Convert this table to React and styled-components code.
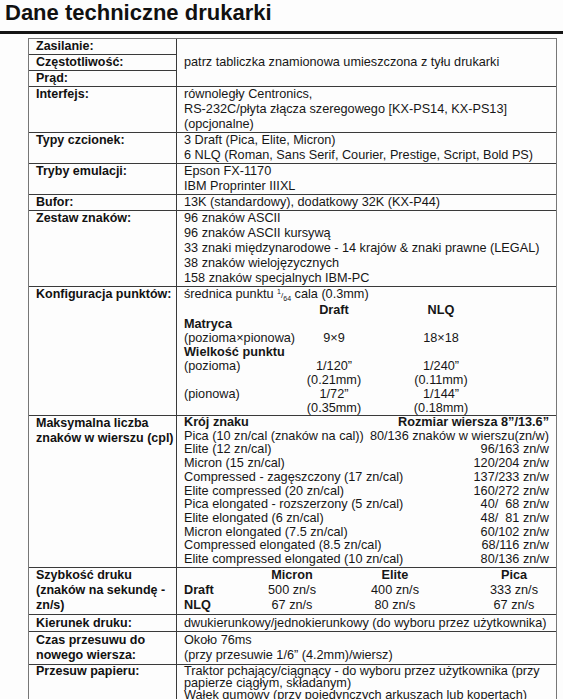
import React from 'react'
import styled, { createGlobalStyle } from 'styled-components'

const Global = createGlobalStyle`
  html, body {
    margin: 0;
    padding: 0;
    background: #fdfdfd;
  }
  body {
    font-family: "Liberation Sans", Arial, sans-serif;
    color: #161616;
    overflow: hidden;
  }
`

const Page = styled.div`
  width: 563px;
  height: 699px;
  overflow: hidden;
`

const Title = styled.h1`
  margin: 0;
  padding-left: 5px;
  font-size: 22px;
  line-height: 26px;
  font-weight: bold;
  color: #111;
`

const Rule = styled.div`
  height: 3px;
  margin-top: 5px;
  background: #151515;
`

const Table = styled.div`
  margin: 4px 0 0 28px;
  width: 529px;
  box-sizing: border-box;
  border: 1px solid #777;
  border-bottom: none;
  font-size: 12.7px;
`

const Row = styled.div`
  display: grid;
  grid-template-columns: 148px 1fr;
  border-bottom: 1px solid #3a3a3a;
  line-height: ${p => p.$lh || 15}px;
  padding: ${p => p.$pad || 0}px 0;
`

const Label = styled.div`
  box-sizing: border-box;
  padding-left: 7px;
  border-right: 1px solid #3a3a3a;
  font-weight: bold;
  font-size: 12.5px;
  color: #111;
  margin: ${p => (p.$pad ? `-${p.$pad}px 0` : 0)};
  padding-top: ${p => p.$pad || 0}px;
  padding-bottom: ${p => p.$pad || 0}px;
`

const LabelStack = styled.div`
  border-right: 1px solid #3a3a3a;
`

const StackItem = styled.div`
  padding-left: 7px;
  font-weight: bold;
  font-size: 12.5px;
  color: #111;
  border-bottom: 1px solid #3a3a3a;
  &:last-child {
    border-bottom: none;
  }
`

const Value = styled.div`
  padding: 0 7px;
  align-self: ${p => (p.$center ? 'center' : 'start')};
`

const Line = styled.div`
  white-space: pre;
`

const DotGrid = styled.div`
  display: grid;
  grid-template-columns: 105px 90px 124px;
  line-height: 14px;
`

const Cell = styled.div`
  text-align: ${p => (p.$center ? 'center' : 'left')};
  font-weight: ${p => (p.$bold ? 'bold' : 'normal')};
  grid-column: ${p => (p.$span ? '1 / -1' : 'auto')};
  white-space: pre;
`

const Frac = styled.span`
  font-size: 8px;
  & sup, & sub {
    font-size: 7px;
    line-height: 0;
  }
`

const CplList = styled.div`
  line-height: 13.7px;
`

const CplHead = styled.div`
  display: flex;
  justify-content: space-between;
  font-weight: bold;
`

const CplRow = styled.div`
  display: flex;
  justify-content: space-between;
  white-space: pre;
`

const SpeedGrid = styled.div`
  display: grid;
  grid-template-columns: 60px 72px 103px 119px;
`

const SpeedKeys = styled.div`
  display: flex;
  flex-direction: column;
  font-weight: bold;
`

const SpeedCol = styled.div`
  justify-self: end;
  display: flex;
  flex-direction: column;
  align-items: center;
  & > b {
    font-weight: bold;
  }
`

const cpl = [
  ['Pica (10 zn/cal (znaków na cal))', '80/136 znaków w wierszu(zn/w)'],
  ['Elite (12 zn/cal)', '96/163 zn/w'],
  ['Micron (15 zn/cal)', '120/204 zn/w'],
  ['Compressed - zagęszczony (17 zn/cal)', '137/233 zn/w'],
  ['Elite compressed (20 zn/cal)', '160/272 zn/w'],
  ['Pica elongated - rozszerzony (5 zn/cal)', '40/  68 zn/w'],
  ['Elite elongated (6 zn/cal)', '48/  81 zn/w'],
  ['Micron elongated (7.5 zn/cal)', '60/102 zn/w'],
  ['Compressed elongated (8.5 zn/cal)', '68/116 zn/w'],
  ['Elite compressed elongated (10 zn/cal)', '80/136 zn/w'],
]

const speeds = [
  ['Micron', '500 zn/s', '67 zn/s'],
  ['Elite', '400 zn/s', '80 zn/s'],
  ['Pica', '333 zn/s', '67 zn/s'],
]

const SimpleRow = ({ label, lines, lh, pad }) => (
  <Row $lh={lh} $pad={pad}>
    <Label $pad={pad}>{label}</Label>
    <Value>
      {lines.map(l => (
        <Line key={l}>{l}</Line>
      ))}
    </Value>
  </Row>
)

const App = () => (
  <Page>
    <Global />
    <Title>Dane techniczne drukarki</Title>
    <Rule />
    <Table>
      <Row>
        <LabelStack>
          <StackItem>Zasilanie:</StackItem>
          <StackItem>Częstotliwość:</StackItem>
          <StackItem>Prąd:</StackItem>
        </LabelStack>
        <Value $center>patrz tabliczka znamionowa umieszczona z tyłu drukarki</Value>
      </Row>
      <SimpleRow
        label="Interfejs:"
        lines={['równoległy Centronics,', 'RS-232C/płyta złącza szeregowego [KX-PS14, KX-PS13]', '(opcjonalne)']}
      />
      <SimpleRow
        label="Typy czcionek:"
        lines={['3 Draft (Pica, Elite, Micron)', '6 NLQ (Roman, Sans Serif, Courier, Prestige, Script, Bold PS)']}
      />
      <SimpleRow label="Tryby emulacji:" lines={['Epson FX-1170', 'IBM Proprinter IIIXL']} />
      <SimpleRow label="Bufor:" lines={['13K (standardowy), dodatkowy 32K (KX-P44)']} />
      <SimpleRow
        label="Zestaw znaków:"
        lines={[
          '96 znaków ASCII',
          '96 znaków ASCII kursywą',
          '33 znaki międzynarodowe - 14 krajów & znaki prawne (LEGAL)',
          '38 znaków wielojęzycznych',
          '158 znaków specjalnych IBM-PC',
        ]}
      />
      <Row $lh={14}>
        <Label>Konfiguracja punktów:</Label>
        <Value>
          <DotGrid>
            <Cell $span>
              średnica punktu{' '}
              <Frac>
                <sup>1</sup>/<sub>64</sub>
              </Frac>{' '}
              cala (0.3mm)
            </Cell>
            <Cell />
            <Cell $center $bold>Draft</Cell>
            <Cell $center $bold>NLQ</Cell>
            <Cell $span $bold>Matryca</Cell>
            <Cell>(pozioma×pionowa)</Cell>
            <Cell $center>9×9</Cell>
            <Cell $center>18×18</Cell>
            <Cell $span $bold>Wielkość punktu</Cell>
            <Cell>(pozioma)</Cell>
            <Cell $center>1/120”</Cell>
            <Cell $center>1/240”</Cell>
            <Cell />
            <Cell $center>(0.21mm)</Cell>
            <Cell $center>(0.11mm)</Cell>
            <Cell>(pionowa)</Cell>
            <Cell $center>1/72”</Cell>
            <Cell $center>1/144”</Cell>
            <Cell />
            <Cell $center>(0.35mm)</Cell>
            <Cell $center>(0.18mm)</Cell>
          </DotGrid>
        </Value>
      </Row>
      <Row $lh={15}>
        <Label>
          Maksymalna liczba
          <br />
          znaków w wierszu (cpl)
        </Label>
        <Value>
          <CplList>
            <CplHead>
              <span>Krój znaku</span>
              <span>Rozmiar wiersza 8”/13.6”</span>
            </CplHead>
            {cpl.map(([a, b]) => (
              <CplRow key={a}>
                <span>{a}</span>
                <span>{b}</span>
              </CplRow>
            ))}
          </CplList>
        </Value>
      </Row>
      <Row $lh={15.3}>
        <Label>
          Szybkość druku
          <br />
          (znaków na sekundę -
          <br />
          zn/s)
        </Label>
        <Value>
          <SpeedGrid>
            <SpeedKeys>
              <span>&nbsp;</span>
              <span>Draft</span>
              <span>NLQ</span>
            </SpeedKeys>
            {speeds.map(([h, d, n]) => (
              <SpeedCol key={h}>
                <b>{h}</b>
                <span>{d}</span>
                <span>{n}</span>
              </SpeedCol>
            ))}
          </SpeedGrid>
        </Value>
      </Row>
      <SimpleRow
        label="Kierunek druku:"
        lh={14.5}
        pad={1}
        lines={['dwukierunkowy/jednokierunkowy (do wyboru przez użytkownika)']}
      />
      <SimpleRow
        label={
          <>
            Czas przesuwu do
            <br />
            nowego wiersza:
          </>
        }
        lh={15}
        pad={1}
        lines={['Około 76ms', '(przy przesuwie 1/6” (4.2mm)/wiersz)']}
      />
      <SimpleRow
        label="Przesuw papieru:"
        lh={12}
        pad={0}
        lines={[
          'Traktor pchający/ciągnący - do wyboru przez użytkownika (przy',
          'papierze ciągłym, składanym)',
          'Wałek gumowy (przy pojedynczych arkuszach lub kopertach)',
        ]}
      />
    </Table>
  </Page>
)

export default App
